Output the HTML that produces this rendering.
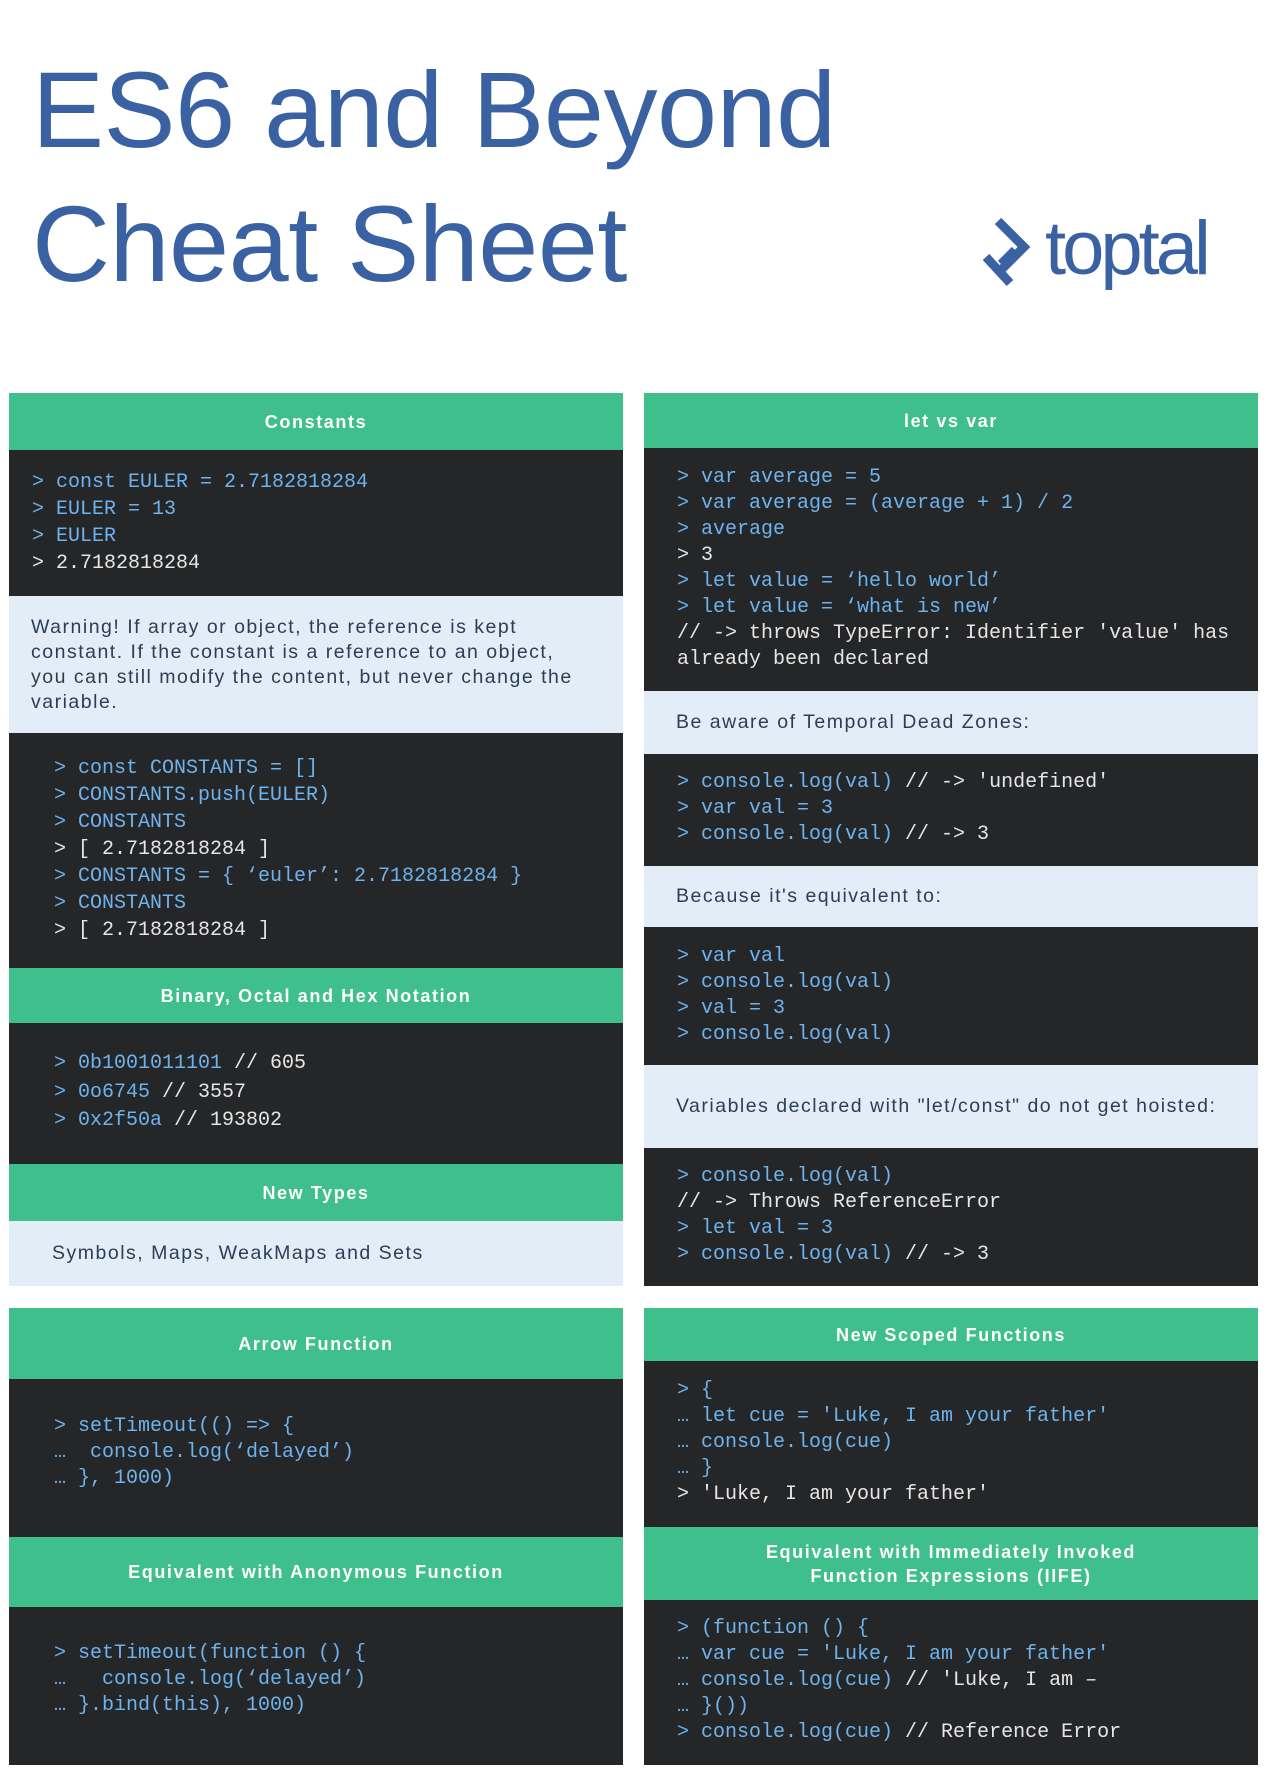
<!DOCTYPE html>
<html><head><meta charset="utf-8"><style>
*{margin:0;padding:0;box-sizing:border-box}
body{width:1266px;height:1785px;background:#fff;position:relative;overflow:hidden;font-family:"Liberation Sans",sans-serif}
.t{position:absolute;left:32px;color:#3a62a3;font-size:108px;line-height:1;white-space:nowrap;letter-spacing:-0.5px}
.b{position:absolute;}
.h{background:#3ebf8b;color:#fff;font-weight:bold;font-size:18px;letter-spacing:1.6px;display:flex;align-items:center;justify-content:center;text-align:center;line-height:24px}
.c{background:#252628;font-family:"Liberation Mono","DejaVu Sans Mono",monospace;font-size:20px;line-height:27px;color:#e6e6e6;white-space:pre}
.c .k{color:#6db3ee}
.l{background:#e3edf8;color:#2c3e55;font-size:19.5px;letter-spacing:1.5px;line-height:25px;display:flex;align-items:center;white-space:nowrap}
.L{left:9px;width:614px}
.R{left:644px;width:614px}
</style></head><body>
<div class="t" style="top:56px">ES6 and Beyond</div>
<div class="t" style="top:190px">Cheat Sheet</div>
<svg style="position:absolute;left:982px;top:217px" width="52" height="70" viewBox="0 0 52 70">
<path d="M16 4 L42 30 L18 54" fill="none" stroke="#3a62a3" stroke-width="9"/>
<path d="M4 40 L28 66" fill="none" stroke="#3a62a3" stroke-width="9"/>
<path d="M18 46 L32 32" fill="none" stroke="#3a62a3" stroke-width="6"/>
</svg>
<div style="position:absolute;left:1045px;top:211px;font-size:76px;color:#3a62a3;letter-spacing:-4px;line-height:1">toptal</div>

<div class="b h L" style="top:393px;height:57px">Constants</div>
<div class="b c L" style="top:450px;height:146px;padding:19px 0 0 23px"><span class="k">&gt; const EULER = 2.7182818284
&gt; EULER = 13
&gt; EULER</span>
&gt; 2.7182818284</div>
<div class="b l L" style="top:596px;height:137px;padding:0 30px 0 22px;white-space:normal">Warning! If array or object, the reference is kept constant. If the constant is a reference to an object, you can still modify the content, but never change the variable.</div>
<div class="b c L" style="top:733px;height:235px;padding:22px 0 0 45px"><span class="k">&gt; const CONSTANTS = []
&gt; CONSTANTS.push(EULER)
&gt; CONSTANTS</span>
&gt; [ 2.7182818284 ]
<span class="k">&gt; CONSTANTS = { ‘euler’: 2.7182818284 }
&gt; CONSTANTS</span>
&gt; [ 2.7182818284 ]</div>
<div class="b h L" style="top:968px;height:55px">Binary, Octal and Hex Notation</div>
<div class="b c L" style="top:1023px;height:141px;padding:27px 0 0 45px;line-height:28.5px"><span class="k">&gt; 0b1001011101</span> // 605
<span class="k">&gt; 0o6745</span> // 3557
<span class="k">&gt; 0x2f50a</span> // 193802</div>
<div class="b h L" style="top:1164px;height:57px">New Types</div>
<div class="b l L" style="top:1221px;height:65px;padding-left:43px">Symbols, Maps, WeakMaps and Sets</div>

<div class="b h L" style="top:1308px;height:71px">Arrow Function</div>
<div class="b c L" style="top:1379px;height:158px;padding:35px 0 0 45px;line-height:26px"><span class="k">&gt; setTimeout(() =&gt; {
…  console.log(‘delayed’)
… }, 1000)</span></div>
<div class="b h L" style="top:1537px;height:70px">Equivalent with Anonymous Function</div>
<div class="b c L" style="top:1607px;height:158px;padding:34px 0 0 45px;line-height:26px"><span class="k">&gt; setTimeout(function () {
…   console.log(‘delayed’)
… }.bind(this), 1000)</span></div>

<div class="b h R" style="top:393px;height:55px">let vs var</div>
<div class="b c R" style="top:448px;height:243px;padding:17px 0 0 33px;line-height:26px"><span class="k">&gt; var average = 5
&gt; var average = (average + 1) / 2
&gt; average</span>
&gt; 3
<span class="k">&gt; let value = ‘hello world’
&gt; let value = ‘what is new’</span>
// -&gt; throws TypeError: Identifier 'value' has
already been declared</div>
<div class="b l R" style="top:691px;height:63px;padding-left:32px">Be aware of Temporal Dead Zones:</div>
<div class="b c R" style="top:754px;height:112px;padding:16px 0 0 33px;line-height:26px"><span class="k">&gt; console.log(val)</span> // -&gt; 'undefined'
<span class="k">&gt; var val = 3
&gt; console.log(val)</span> // -&gt; 3</div>
<div class="b l R" style="top:866px;height:61px;padding-left:32px">Because it's equivalent to:</div>
<div class="b c R" style="top:927px;height:138px;padding:17px 0 0 33px;line-height:26px"><span class="k">&gt; var val
&gt; console.log(val)
&gt; val = 3
&gt; console.log(val)</span></div>
<div class="b l R" style="top:1065px;height:83px;padding-left:32px">Variables declared with "let/const" do not get hoisted:</div>
<div class="b c R" style="top:1148px;height:138px;padding:16px 0 0 33px;line-height:26px"><span class="k">&gt; console.log(val)</span>
// -&gt; Throws ReferenceError
<span class="k">&gt; let val = 3
&gt; console.log(val)</span> // -&gt; 3</div>

<div class="b h R" style="top:1308px;height:53px">New Scoped Functions</div>
<div class="b c R" style="top:1361px;height:166px;padding:17px 0 0 33px;line-height:26px"><span class="k">&gt; {
… let cue = 'Luke, I am your father'
… console.log(cue)
… }</span>
&gt; 'Luke, I am your father'</div>
<div class="b h R" style="top:1527px;height:73px">Equivalent with Immediately Invoked<br>Function Expressions (IIFE)</div>
<div class="b c R" style="top:1600px;height:165px;padding:16px 0 0 33px;line-height:26px"><span class="k">&gt; (function () {
… var cue = 'Luke, I am your father'
… console.log(cue)</span> // 'Luke, I am –
<span class="k">… }())
&gt; console.log(cue)</span> // Reference Error</div>
</body></html>
